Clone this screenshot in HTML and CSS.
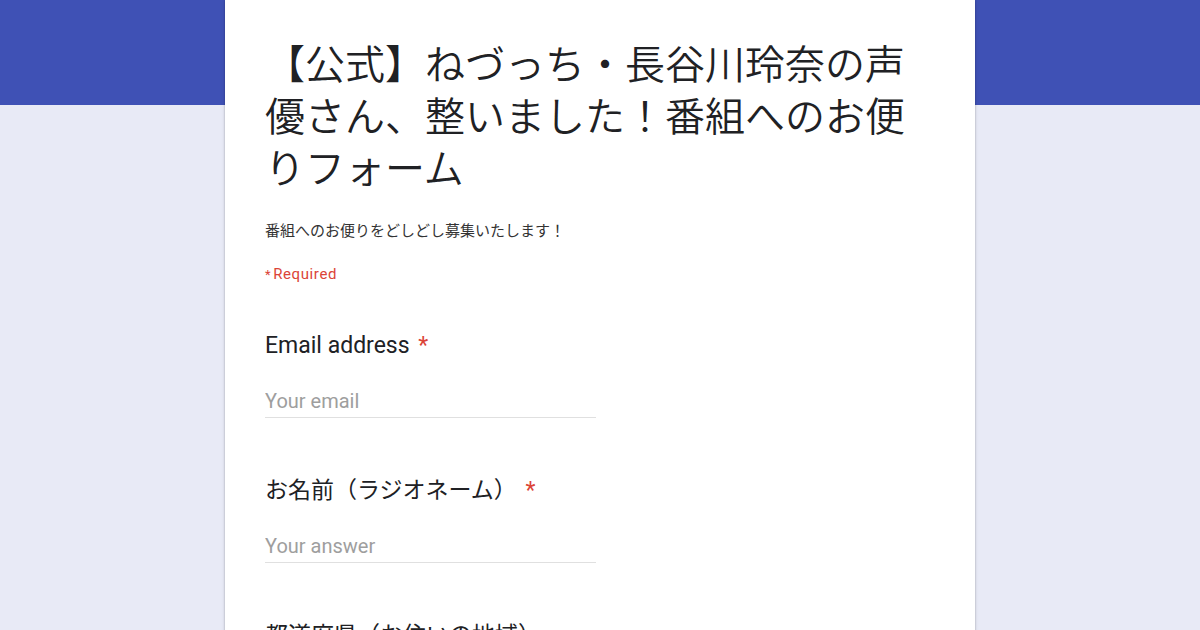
FILE: index.html
```html
<!DOCTYPE html>
<html lang="ja">
<head>
<meta charset="utf-8">
<title>【公式】ねづっち・長谷川玲奈の声優さん、整いました！番組へのお便りフォーム</title>
<link rel="stylesheet" href="styles.css">
</head>
<body>
<div class="band"></div>
<main class="card">
  <h1 class="title">【公式】ねづっち・長谷川玲奈の声優さん、整いました！番組へのお便りフォーム</h1>
  <p class="desc">番組へのお便りをどしどし募集いたします！</p>
  <p class="required"><span class="mini">*</span>Required</p>

  <div class="item">
    <div class="label">Email address <span class="star">*</span></div>
    <input class="field" type="email" placeholder="Your email">
  </div>

  <div class="item">
    <div class="label">お名前（ラジオネーム） <span class="star">*</span></div>
    <input class="field" type="text" placeholder="Your answer">
  </div>

  <div class="item">
    <div class="label">都道府県（お住いの地域）</div>
    <input class="field" type="text" placeholder="Your answer">
  </div>
</main>
</body>
</html>
```
FILE: styles.css
```css
html, body {
  margin: 0;
  padding: 0;
}
body {
  background: #e8eaf6;
  font-family: Roboto, "Noto Sans CJK JP", sans-serif;
  color: #202124;
  overflow: hidden;
}
.band {
  height: 105px;
  background: #3f51b5;
}
.card {
  width: 750px;
  box-sizing: border-box;
  margin: -105px auto 0;
  min-height: 800px;
  background: #fff;
  padding: 36px 40px 40px;
  box-shadow: 0 0 2px rgba(0,0,0,0.25), 0 0 4px rgba(0,0,0,0.1);
}
.title {
  margin: 0;
  font-family: "Noto Sans CJK JP", sans-serif;
  font-weight: 350;
  font-size: 40px;
  line-height: 52px;
  color: #202124;
}
.desc {
  margin: 28px 0 0;
  font-family: "Noto Sans CJK JP", sans-serif;
  font-size: 15px;
  line-height: 20px;
  color: #333;
}
.required {
  margin: 24px 0 0;
  font-size: 15px;
  line-height: 20px;
  letter-spacing: 0.6px;
  color: #db4437;
}
.mini {
  font-size: 13px;
  margin-right: 2px;
}
.item {
  margin-top: 46px;
}
.item + .item {
  margin-top: 58px;
}
.label {
  font-size: 23px;
  line-height: 30px;
  color: #202124;
}
.star {
  color: #db4437;
  margin-left: 3px;
}
.field {
  display: block;
  margin-top: 28px;
  width: 331px;
  height: 29px;
  box-sizing: border-box;
  padding: 0 0 4px;
  border: 0;
  border-bottom: 1px solid #e0e0e0;
  font-family: Roboto, sans-serif;
  font-size: 20px;
  color: #202124;
  background: transparent;
  outline: none;
}
.field::placeholder {
  color: #9e9e9e;
}
```
